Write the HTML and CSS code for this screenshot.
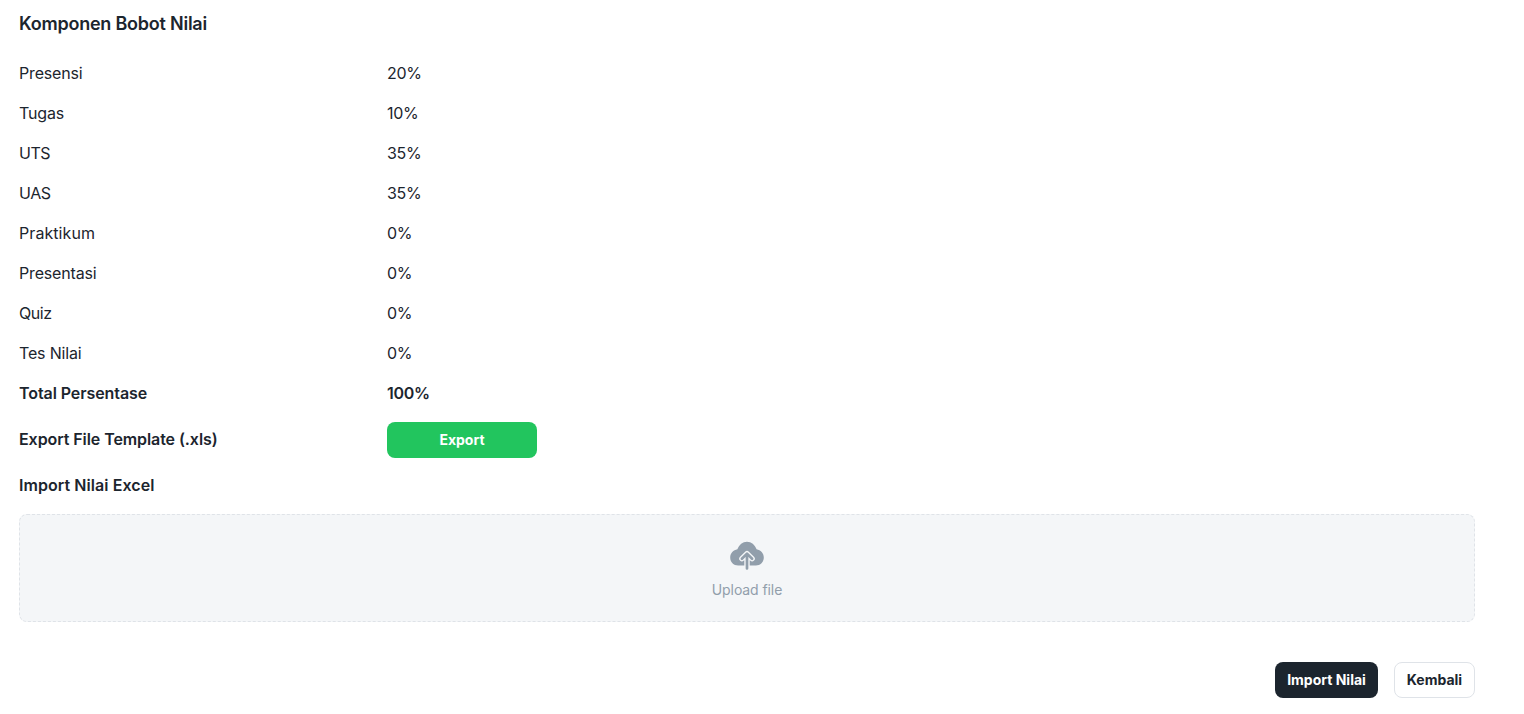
FILE: index.html
```html
<!DOCTYPE html>
<html lang="id">
<head>
<meta charset="utf-8">
<title>Komponen Bobot Nilai</title>
<link rel="stylesheet" href="styles.css">
</head>
<body>
<main class="page">
  <h1 class="title">Komponen Bobot Nilai</h1>
  <div class="rows">
    <div class="row"><span class="label">Presensi</span><span class="value">20%</span></div>
    <div class="row"><span class="label">Tugas</span><span class="value">10%</span></div>
    <div class="row"><span class="label caps">UTS</span><span class="value">35%</span></div>
    <div class="row"><span class="label caps">UAS</span><span class="value">35%</span></div>
    <div class="row"><span class="label wide">Praktikum</span><span class="value">0%</span></div>
    <div class="row"><span class="label">Presentasi</span><span class="value">0%</span></div>
    <div class="row"><span class="label caps">Quiz</span><span class="value">0%</span></div>
    <div class="row"><span class="label">Tes Nilai</span><span class="value">0%</span></div>
    <div class="row strong"><span class="label">Total Persentase</span><span class="value">100%</span></div>
    <div class="row strong"><span class="label">Export File Template (.xls)</span><button class="btn export">Export</button></div>
    <div class="row strong"><span class="label wide">Import Nilai Excel</span></div>
    <div class="dropzone">
      <svg class="cloud" width="34" height="30" viewBox="0 0 34 30">
        <path fill="#919eab" d="M8.200 25.500C3.600 25.500.2 22.100.2 17.500.2 13.300 3.400 10 7.400 9.300 9.100 4.800 12.600 1.700 17 1.700s7.900 3.100 9.600 7.600c4 .7 7.200 4 7.200 8.200 0 4.600-3.400 8-8 8z"/>
        <path fill="none" stroke="#f4f6f8" stroke-width="5.400" stroke-linecap="round" stroke-linejoin="round" d="M17 28.500V14.800M11.900 18.700 17 13.600l5.100 5.100"/>
        <path fill="none" stroke="#919eab" stroke-width="2.700" stroke-linecap="round" stroke-linejoin="round" d="M17 28.500V14.800M11.900 18.700 17 13.600l5.100 5.100"/>
      </svg>
      <span class="hint">Upload file</span>
    </div>
  </div>
  <div class="actions">
    <button class="btn primary">Import Nilai</button>
    <button class="btn outline">Kembali</button>
  </div>
</main>
</body>
</html>
```
FILE: styles.css
```css
* { box-sizing: border-box; }
body {
  margin: 0;
  background: #fff;
  color: #1c252e;
  font-family: Inter, "Liberation Sans", sans-serif;
  font-size: 16px;
  line-height: 24px;
}
.page { padding: 10px 49px 16px 19px; }
.title {
  margin: 0 0 24px;
  font-size: 18px;
  font-weight: 600;
  line-height: 28px;
  letter-spacing: -0.23px;
}
.rows { display: flex; flex-direction: column; gap: 16px; }
.row { display: grid; grid-template-columns: 368px 1fr; align-items: center; }
.label, .value { margin: -1px 0 1px; }
.label { letter-spacing: -0.17px; }
.value { letter-spacing: -0.3px; }
.caps { letter-spacing: -0.45px; }
.wide { letter-spacing: 0.07px; }
.strong { font-weight: 600; }
.strong .label:not(.wide) { letter-spacing: -0.08px; }
.btn {
  height: 36px;
  padding: 0;
  border: 0;
  border-radius: 8px;
  font: 700 14px/24px Inter, "Liberation Sans", sans-serif;
}
.export { width: 150px; background: #22c55e; color: #fff; }
.dropzone {
  height: 108px;
  display: flex;
  flex-direction: column;
  align-items: center;
  padding-top: 25px;
  gap: 9px;
  border: 1px dashed #dfe3e8;
  border-radius: 8px;
  background: #f4f6f8;
}
.cloud { display: block; }
.hint { font-size: 14px; line-height: 22px; letter-spacing: -0.08px; color: #919eab; }
.actions { display: flex; justify-content: flex-end; gap: 16px; margin-top: 40px; }
.primary { width: 103px; background: #1c252e; color: #fff; }
.outline { width: 81px; background: #fff; color: #1c252e; border: 1px solid #dfe3e8; }
```
